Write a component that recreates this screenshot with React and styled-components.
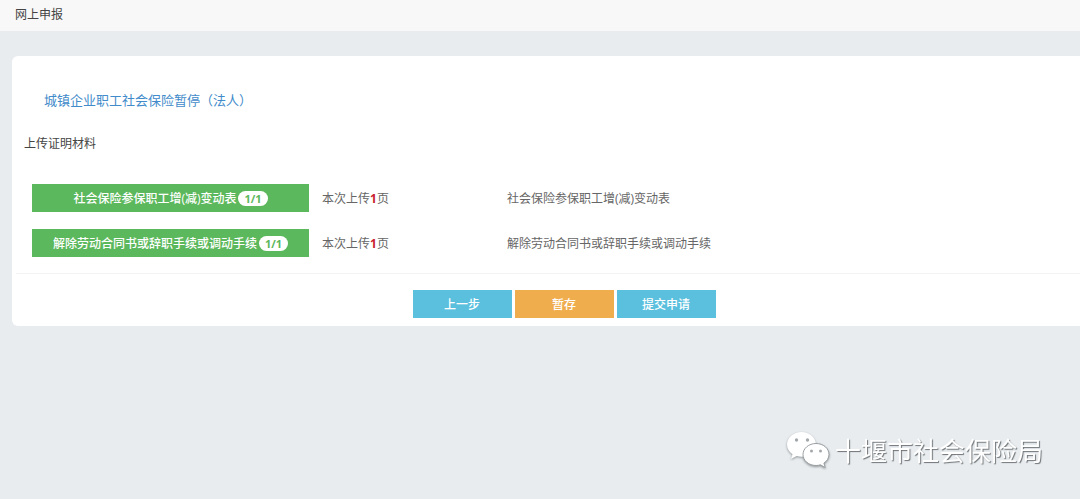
import styled, { createGlobalStyle } from 'styled-components';

const materials = [
  { name: "社会保险参保职工增(减)变动表", uploaded: 1, required: 1 },
  { name: "解除劳动合同书或辞职手续或调动手续", uploaded: 1, required: 1 },
];

const App = () => {
  return (
    <>
      <GlobalStyle />
      <TopBar>网上申报</TopBar>
      <Main>
        <Card>
          <Title>城镇企业职工社会保险暂停（法人）</Title>
          <SectionLabel>上传证明材料</SectionLabel>
          <MaterialList>
            {materials.map((item) => (
              <MaterialRow key={item.name}>
                <UploadButton type="button">
                  {item.name}
                  <Badge>{item.uploaded}/{item.required}</Badge>
                </UploadButton>
                <Note>本次上传<Count>{item.uploaded}</Count>页</Note>
                <Note>{item.name}</Note>
              </MaterialRow>
            ))}
          </MaterialList>
          <Divider />
          <ButtonContainer>
            <ActionButton type="button">上一步</ActionButton>
            <ActionButton type="button" $color="#f0ad4e">暂存</ActionButton>
            <ActionButton type="button">提交申请</ActionButton>
          </ButtonContainer>
        </Card>
      </Main>
      <Watermark>
        <WechatIcon />
        十堰市社会保险局
      </Watermark>
    </>
  );
}

const WechatIcon = () => {
  return (
    <Logo viewBox="0 0 44 38" aria-hidden="true">
      <path fill="#fff" d="M15.500 1C7.500 1 1 6.600 1 13.500c0 4 2.100 7.500 5.500 9.800L5 28l5.700-3c1.600.5 3.200.7 4.800.7 8 0 14.500-5.300 14.500-12.200S23.500 1 15.500 1z" />
      <circle cx="10.500" cy="9" r="1.700" fill="#a3a8ab" />
      <circle cx="21.500" cy="9" r="1.700" fill="#a3a8ab" />
      <path fill="#fff" stroke="#9a9fa2" strokeWidth="1" d="M30 12.500c-7.200 0-13 4.900-13 11s5.800 11 13 11c1.600 0 3-.2 4.400-.7l4.800 2.700-1.300-4.400c3.100-2 5.100-5.100 5.100-8.600 0-6.100-5.800-11-13-11z" />
      <circle cx="25.500" cy="20" r="1.500" fill="#a3a8ab" />
      <circle cx="34.500" cy="20" r="1.500" fill="#a3a8ab" />
    </Logo>
  );
}

export default App;

const GlobalStyle = createGlobalStyle`
  * {
    box-sizing: border-box;
  }
  body {
    margin: 0;
    background-color: #e8ecef;
    color: #666;
    font-family: "Open Sans", "Noto Sans CJK SC", sans-serif;
    font-size: 12px;
    line-height: 20px;
  }
`;

const TopBar = styled.header`
  padding: 5px 15px 6px;
  background-color: #f8f8f8;
  color: #444;
`;

const Main = styled.main`
  padding: 25px 0 0 12px;
`;

const Card = styled.section`
  padding: 34px 0 8px 4px;
  border-radius: 6px 0 0 6px;
  background-color: #fff;
`;

const Title = styled.h1`
  margin: 0 0 24px;
  padding-left: 28px;
  color: #428bca;
  font-size: 13px;
  font-weight: 400;
  line-height: 20px;
`;

const SectionLabel = styled.p`
  margin: 0 0 30px;
  padding-left: 8px;
  color: #444;
`;

const MaterialList = styled.div`
  display: flex;
  flex-direction: column;
  gap: 17px;
  padding-left: 16px;
`;

const MaterialRow = styled.div`
  display: grid;
  grid-template-columns: 277px 172px 1fr;
  column-gap: 13px;
  align-items: center;
`;

const Note = styled.span`
  padding-top: 2px;
`;

const BaseButton = styled.button`
  height: 28px;
  padding: 0;
  border: none;
  color: #fff;
  font-family: inherit;
  font-size: 12px;
  font-weight: 500;
  cursor: pointer;
`;

const UploadButton = styled(BaseButton)`
  display: flex;
  align-items: center;
  justify-content: center;
  gap: 2px;
  background-color: #5cb85c;
`;

const Badge = styled.span`
  padding: 0 6px;
  border-radius: 8px;
  background-color: #fff;
  color: #5cb85c;
  font-size: 11px;
  font-weight: 700;
  line-height: 15px;
`;

const Count = styled.b`
  color: #c9202c;
`;

const Divider = styled.hr`
  margin: 16px 0;
  border: none;
  border-top: 1px solid #f3f3f3;
`;

const ButtonContainer = styled.div`
  display: flex;
  justify-content: center;
  gap: 3px;
  padding-left: 32px;
`;

const ActionButton = styled(BaseButton)`
  width: 99px;
  background-color: ${({ $color }) => $color || "#5bc0de"};
`;

const Watermark = styled.div`
  position: fixed;
  right: 37px;
  bottom: 29px;
  display: flex;
  align-items: center;
  gap: 5px;
  color: #fff;
  font-family: "Noto Sans CJK SC", sans-serif;
  font-size: 26px;
  font-weight: 400;
  line-height: 40px;
  text-shadow: 1px 1px 1px #6f7477;
`;

const Logo = styled.svg`
  width: 44px;
  height: 38px;
  filter: drop-shadow(0 1px 1px #8f9497);
`;
